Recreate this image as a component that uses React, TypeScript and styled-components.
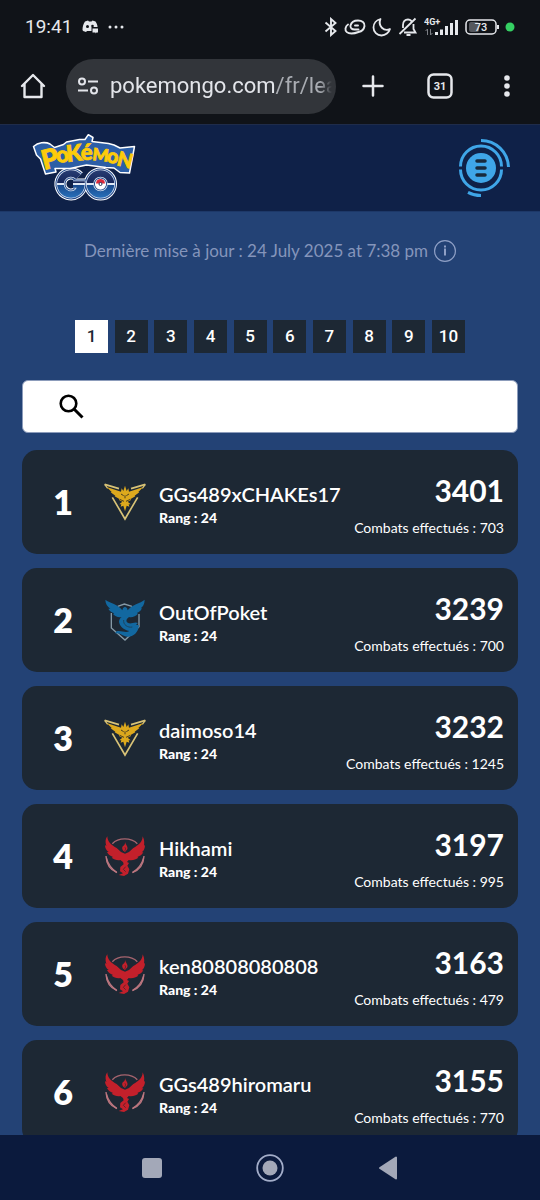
import React from 'react';
import styled, { createGlobalStyle } from 'styled-components';

const GlobalStyle = createGlobalStyle`
  *, *::before, *::after { box-sizing: border-box; }
  body { margin: 0; background: #234275; font-family: Lato, "Open Sans", sans-serif; }
  button { border: 0; padding: 0; background: none; font: inherit; color: inherit; cursor: pointer; }
  ol { list-style: none; margin: 0; padding: 0; }
  h2, p { margin: 0; }
  svg { display: block; flex: none; }
`;

const Screen = styled.div`
  display: flex;
  flex-direction: column;
  height: 100vh;
  overflow: hidden;
`;

/* ---------- Phone and browser chrome ---------- */

const Chrome = styled.div`
  flex: none;
  background: #101318;
  color: #e6e8ec;
  font-family: Roboto, sans-serif;
`;

const StatusBar = styled.div`
  display: flex;
  align-items: center;
  height: 54px;
  padding: 0 25px;
  gap: 10px;
`;

const Clock = styled.time`
  font-size: 19px;
  line-height: 24px;
`;

const StatusIcons = styled.div`
  display: flex;
  align-items: center;
  gap: 6px;
  margin-left: auto;
`;

const AddressRow = styled.div`
  display: flex;
  align-items: center;
  height: 64px;
  margin-bottom: 6px;
  padding: 0 20px;
`;

const ToolButton = styled.button`
  display: flex;
  align-items: center;
  justify-content: center;
  flex: none;
  width: 26px;
  height: 40px;
`;

const AddressPill = styled.button`
  display: flex;
  align-items: center;
  flex: 1;
  min-width: 0;
  height: 55px;
  margin-left: 20px;
  padding: 0 4px 0 12px;
  gap: 12px;
  border-radius: 28px;
  background: #32353a;
`;

const Address = styled.span`
  flex: 1;
  min-width: 0;
  overflow: hidden;
  white-space: nowrap;
  text-align: left;
  font-size: 22px;
  line-height: 32px;
  color: #a9acb2;
  mask-image: linear-gradient(to left, transparent, #000 12px);
`;

const Domain = styled.span`
  color: #e3e5ea;
`;

const Tools = styled.div`
  display: flex;
  align-items: center;
  gap: 41px;
  margin-left: 24px;
`;

/* ---------- Site ---------- */

const SiteHeader = styled.header`
  display: flex;
  align-items: center;
  justify-content: space-between;
  flex: none;
  height: 88px;
  padding: 0 29px 0 32px;
  background: #0f2148;
  border-top: 1px solid #1f2c4a;
  border-bottom: 1px solid #1d3868;
`;

const LogoLink = styled.a`
  display: block;
`;

const MenuButton = styled.button`
  display: block;
`;

const Main = styled.main`
  flex: 1;
  min-height: 0;
  overflow: hidden;
  background: #234275;
  padding: 27px 22px 0;
`;

const Updated = styled.p`
  display: flex;
  align-items: center;
  justify-content: center;
  gap: 6px;
  height: 24px;
  font-size: 17px;
  line-height: 24px;
  color: #8595bb;
`;

const InfoButton = styled.button`
  display: block;
`;

const Pages = styled.nav`
  display: flex;
  justify-content: space-between;
  width: 100%;
  max-width: 390px;
  margin: 57px auto 0;
`;

const PageLink = styled.a<{ $current?: boolean }>`
  width: 33px;
  height: 33px;
  background: ${(p) => (p.$current ? '#ffffff' : '#1d2834')};
  color: ${(p) => (p.$current ? '#1d2834' : '#ffffff')};
  font: 500 17px/33px Roboto, sans-serif;
  text-align: center;
  text-decoration: none;
`;

const SearchBox = styled.label`
  display: flex;
  align-items: center;
  gap: 12px;
  height: 53px;
  margin-top: 27px;
  padding: 0 16px 0 36px;
  border: 1px solid #8c9cbb;
  border-radius: 6px;
  background: #fff;
`;

const SearchInput = styled.input`
  flex: 1;
  min-width: 0;
  height: 40px;
  border: 0;
  outline: 0;
  background: transparent;
  font: 400 18px/24px Lato, sans-serif;
`;

const Board = styled.ol`
  display: flex;
  flex-direction: column;
  gap: 14px;
  margin-top: 17px;
`;

const Card = styled.li`
  display: grid;
  grid-template-columns: 82px 42px 1fr auto;
  height: 104px;
  padding-right: 14px;
  border-radius: 15px;
  background: #1d2834;
  color: #fff;
`;

const Rank = styled.span`
  align-self: center;
  text-align: center;
  font-size: 34px;
  line-height: 40px;
  font-weight: 800;
`;

const Team = styled.span`
  align-self: center;
`;

const Trainer = styled.div`
  padding: 31px 0 0 13px;
`;

const Name = styled.h2`
  font-size: 20px;
  line-height: 26px;
  font-weight: 600;
`;

const Level = styled.p`
  font-size: 14px;
  line-height: 22px;
  font-weight: 900;
`;

const Result = styled.div`
  padding-top: 20px;
  text-align: right;
`;

const Score = styled.p`
  font-size: 30px;
  line-height: 40px;
  font-weight: 700;
`;

const Battles = styled.p`
  margin-top: 8px;
  font-size: 14px;
  line-height: 20px;
`;

const SystemNav = styled.nav`
  display: flex;
  align-items: center;
  justify-content: center;
  flex: none;
  gap: 90px;
  height: 65px;
  background: #0b1a3d;
`;

const SystemButton = styled.button`
  display: flex;
  align-items: center;
  justify-content: center;
  width: 28px;
  height: 28px;
`;

/* ---------- Drawings ---------- */

const wordmark = [
  { char: 'P', x: 12, y: 37, size: 27, turn: -14 },
  { char: 'o', x: 25, y: 30, size: 22, turn: -8 },
  { char: 'K', x: 35, y: 29, size: 23, turn: -6 },
  { char: 'é', x: 49, y: 27, size: 22, turn: -2 },
  { char: 'M', x: 60, y: 27, size: 17, turn: 6 },
  { char: 'o', x: 74, y: 29, size: 20, turn: 10 },
  { char: 'N', x: 84, y: 32, size: 20, turn: 14 },
];

const Rings = ({ stroke, width }: { stroke: string; width: number }) => (
  <g fill="none" stroke={stroke} strokeWidth={width}>
    <circle cx="68.5" cy="51" r="10.5" />
    <path d="M46.5 43.7 A10.5 10.5 0 1 0 49.4 51.5 H41" />
  </g>
);

const Logo = () => (
  <svg width="104" height="70" viewBox="0 0 104 70" role="img" aria-label="Pokémon GO">
    <defs>
      <linearGradient id="ring" gradientUnits="userSpaceOnUse" x1="0" y1="35" x2="0" y2="67">
        <stop offset="0" stopColor="#2b4077" />
        <stop offset="0.48" stopColor="#15265a" />
        <stop offset="0.48" stopColor="#dfe8f4" />
        <stop offset="0.52" stopColor="#dfe8f4" />
        <stop offset="0.52" stopColor="#19498c" />
        <stop offset="1" stopColor="#2a76c2" />
      </linearGradient>
    </defs>
    <Rings stroke="#ffffff" width={12} />
    <Rings stroke="#21488a" width={10} />
    <Rings stroke="#d5e0f0" width={8} />
    <Rings stroke="url(#ring)" width={6.5} />
    <circle cx="68.5" cy="51" r="5.2" fill="#fff" />
    <path d="M64 50.4 A4.5 4.5 0 0 1 73 50.4 Z" fill="#d9283a" />
    <circle cx="68.5" cy="51" r="1.5" fill="#fff" stroke="#26345c" strokeWidth="1" />
    <path
      d="M1.5 13.5 C6 9.5 13 8.5 18 11 L22.5 14.5 L31.5 11.5 L34.5 9 L47.5 6.5 L53 6.5 L56.3 1.7 L61 4.5 L60 8.5 L76.5 10.5 L82 12 L88 15 L102.5 13.5 L97.5 40 L88 39.5 L82 35 L74 34.5 L54.5 32 L38 35.5 L23 35.5 L24 39 L13.5 41 L8.5 26 L4.5 22 Z"
      fill="#2c5ea6"
      stroke="#ffffff"
      strokeWidth="1.5"
      strokeLinejoin="round"
    />
    <g fill="#fdcb0a" stroke="#fdcb0a" strokeWidth="0.8" fontFamily="Lato, sans-serif" fontWeight="900">
      {wordmark.map((l, i) => (
        <text key={i} x={l.x} y={l.y} fontSize={l.size} rotate={l.turn}>
          {l.char}
        </text>
      ))}
    </g>
  </svg>
);

const MenuIcon = () => (
  <svg width="60" height="60" viewBox="-30 -30 60 60" aria-hidden="true">
    <circle r="15" fill="#3fa6e8" />
    <g fill="none" stroke="#3fa6e8" strokeWidth="3">
      <path d="M-20.5 -1.5 A20.5 20.5 0 0 1 20.5 -1.5" />
      <path d="M-20.5 1.5 A20.5 20.5 0 0 0 20.5 1.5" />
      <path d="M0 -27.5 A27.5 27.5 0 0 1 27.5 -1" />
      <path d="M0 27.5 A27.5 27.5 0 0 1 -13 24.3" />
    </g>
    <path d="M-4 -7 H4 M-4 0 H4 M-4 7 H4" stroke="#182a3c" strokeWidth="3.5" strokeLinecap="round" />
  </svg>
);

type TeamName = 'instinct' | 'mystic' | 'valor';

const InstinctIcon = () => (
  <svg width="42" height="40" viewBox="27 20 126 120" role="img" aria-label="Instinct">
    <g fill="none" stroke="#d8c377" strokeWidth="5">
      <path d="M52 66 L90 131 L128 66" />
      <path d="M29 27 L72 40 M151 27 L108 40" />
      <path d="M29 27 L38 39 M151 27 L142 39" strokeWidth="4" />
    </g>
    <path
      fill="#dda91d"
      d="M35 35 L78 49 L80 39 L85 47 L90 31 L95 47 L100 39 L102 49 L145 35 L130 50 L133 51 L119 61 L121 63 L107 71 L108 74 L98 79 L107 87 L101 87 L103 94 L95 91 L90 108 L85 91 L77 94 L79 87 L73 87 L82 79 L72 74 L73 71 L59 63 L61 61 L47 51 L50 50 Z"
    />
    <path d="M78 56 L86 61 M102 56 L94 61 M90 60 L90 69 M74 72 L87 78 M106 72 L93 78" stroke="#493e20" strokeWidth="3" />
  </svg>
);

const MysticIcon = () => (
  <svg width="42" height="44" viewBox="27 22 126 132" role="img" aria-label="Mystic">
    <path d="M49 67 V112 L90 148 L132 108 V70 M68 47 L88 40 L111 47" fill="none" stroke="#8599a6" strokeWidth="4" />
    <path
      fill="#1268a0"
      d="M31 27 C44 37 70 41 82 59 L84 52 L90 48 L96 52 L98 59 C110 41 136 39 149 27 C149 40 143 49 137 53 L141 53 C137 62 130 66 125 67 L129 69 C122 77 112 81 102 79 C92 86 92 95 102 98 C110 100 120 92 129 97 L123 102 L132 104 C130 125 116 139 98 138 C82 137 78 125 60 128 L65 122 C78 118 92 129 103 121 C84 118 72 104 72 92 C73 86 76 82 80 79 C69 82 60 76 54 70 L58 68 C49 65 43 61 40 54 L46 54 C37 47 31 39 31 27 Z"
    />
    <path d="M86 88 C84 102 98 112 112 109" fill="none" stroke="#1b4560" strokeWidth="3" />
  </svg>
);

const ValorIcon = () => (
  <svg width="42" height="42" viewBox="27 28 126 126" role="img" aria-label="Valor">
    <path d="M52 54 C70 35 108 35 127 54" fill="none" stroke="#a7656f" strokeWidth="4" />
    <path d="M33 91 C34 115 47 133 66 141 M147 91 C146 115 133 133 112 141" fill="none" stroke="#bd7780" strokeWidth="4" />
    <path d="M34 96 C39 116 49 129 65 140 M146 96 C141 116 131 129 113 140" fill="none" stroke="#bd7780" strokeWidth="4" />
    <path
      fill="#c3202b"
      d="M37 32 C37 48 50 60 65 67 L78 79 L90 84 L102 79 L115 67 C130 60 143 48 143 32 C149 44 148 54 147 60 L150 58 C150 69 146 76 140 80 L145 80 C140 89 133 92 127 94 L130 96 C122 102 113 105 101 103 L96 109 L102 112 L97 120 L103 131 L99 144 L87 151 L71 148 L84 143 L75 137 L76 124 L86 116 L84 109 L76 103 C66 105 57 101 50 96 L54 94 C45 91 39 86 36 79 L41 79 C34 74 30 68 30 58 L34 61 C30 49 31 40 37 32 Z"
    />
    <path d="M90 48 C92 58 100 62 97 71 L90 79 C82 74 79 67 84 61 C88 59 91 55 90 48 Z" fill="#c3202b" />
    <path d="M90 65 C93 69 91 73 89 76 M92 123 L85 131 L92 138" fill="none" stroke="#60202a" strokeWidth="3" />
  </svg>
);

const teamIcons: Record<TeamName, React.FC> = {
  instinct: InstinctIcon,
  mystic: MysticIcon,
  valor: ValorIcon,
};

const StatusGlyphs = () => (
  <>
    <svg width="14" height="20" viewBox="0 0 14 20" fill="none" stroke="#e6e8ec" strokeWidth="1.9" aria-hidden="true">
      <path d="M1.5 5.5 L11.5 14 L7 18 V2 L11.5 6 L1.5 14.5" />
    </svg>
    <svg width="22" height="18" viewBox="0 0 22 18" fill="none" stroke="#e6e8ec" strokeWidth="1.9" strokeLinecap="round" aria-hidden="true">
      <path d="M14.5 11.5 H10.5 C8 11.5 6 10 6.5 7.5 C7.2 4.5 10 2.5 14 2.5 C18 2.5 21 4.5 20.5 8 C20 11.5 17 13.5 14.5 14 C12 15 10 15.500 7.500 15.500 C3.500 15.500 1 13.500 1.500 10.500 C1.800 8.500 2.800 7.200 4 6.500" />
      <path d="M11 7.500 H14" />
    </svg>
    <svg width="20" height="20" viewBox="0 0 20 20" fill="none" stroke="#e6e8ec" strokeWidth="1.8" strokeLinejoin="round" aria-hidden="true">
      <path d="M8.5 2 C4.5 3 1.5 6.5 1.5 10.5 C1.5 15 5 18.5 9.5 18.5 C13.5 18.5 17 15.5 18 12 C12 15 5.5 9 8.5 2 Z" />
    </svg>
    <svg width="20" height="20" viewBox="0 0 20 20" fill="none" stroke="#e6e8ec" strokeWidth="1.8" aria-hidden="true">
      <path d="M5 11 V8 C5 4.5 7 2.5 10 2.5 C11.5 2.5 12.5 3 13.5 4 M15.5 7 V12 L17.5 15.5 H6 M8.5 18 H12.5 M1.5 17 L17.5 1.5" />
    </svg>
  </>
);

const Signal = () => (
  <svg width="35" height="20" viewBox="0 0 35 20" aria-label="4G+" role="img">
    <text x="0" y="8" fontFamily="Roboto, sans-serif" fontSize="9" fontWeight="700" fill="#e6e8ec">4G+</text>
    <path d="M3.5 18 V12 L1.5 14 M6.5 12 V18 L8.5 16" fill="none" stroke="#7b7e84" />
    <path d="M12.5 18 V15 M17.5 18 V12.5 M22.5 18 V9 M27.5 18 V6 M32.5 18 V3" stroke="#e6e8ec" strokeWidth="3" />
  </svg>
);

const Battery = () => (
  <svg width="34" height="18" viewBox="0 0 34 18" role="img" aria-label="73">
    <rect x="4" y="4" width="10" height="10" rx="2" fill="#55585e" />
    <rect x="1" y="2" width="30" height="14" rx="4" fill="none" stroke="#e6e8ec" strokeWidth="1.5" />
    <path d="M33 7 V11" stroke="#e6e8ec" strokeWidth="2" />
    <text x="16" y="13" textAnchor="middle" fontFamily="Roboto, sans-serif" fontSize="11" fontWeight="500" fill="#e6e8ec">73</text>
  </svg>
);

/* ---------- Data ---------- */

const trainers: { name: string; team: TeamName; level: number; score: number; battles: number }[] = [
  { name: 'GGs489xCHAKEs17', team: 'instinct', level: 24, score: 3401, battles: 703 },
  { name: 'OutOfPoket', team: 'mystic', level: 24, score: 3239, battles: 700 },
  { name: 'daimoso14', team: 'instinct', level: 24, score: 3232, battles: 1245 },
  { name: 'Hikhami', team: 'valor', level: 24, score: 3197, battles: 995 },
  { name: 'ken80808080808', team: 'valor', level: 24, score: 3163, battles: 479 },
  { name: 'GGs489hiromaru', team: 'valor', level: 24, score: 3155, battles: 770 },
];

const pages = [1, 2, 3, 4, 5, 6, 7, 8, 9, 10];

export default function App() {
  return (
    <Screen>
      <GlobalStyle />
      <Chrome>
        <StatusBar>
          <Clock>19:41</Clock>
          <svg width="16" height="14" viewBox="0 0 16 14" aria-hidden="true">
            <path d="M3 1.5 L6 0.5 L7 1.5 H9.5 L10.5 0.5 L13.5 1.5 C14.5 3 15.5 5 15.5 7 H9.5 V11 H5 L4 12 C2 11.5 1 11 0.5 10 C0.5 6.5 1.5 3.5 3 1.5 Z" fill="#e6e8ec" />
            <circle cx="5.5" cy="6.5" r="1.5" fill="#101318" />
            <circle cx="10.5" cy="6" r="1.3" fill="#101318" />
            <path d="M10.5 8.5 H16 V12.5 H14.5 L13.5 13.5 V12.5 H10.5 Z" fill="#e6e8ec" />
          </svg>
          <svg width="18" height="4" viewBox="0 0 18 4" fill="#e6e8ec" aria-hidden="true">
            <circle cx="2" cy="2" r="1.5" />
            <circle cx="8" cy="2" r="1.5" />
            <circle cx="14" cy="2" r="1.5" />
          </svg>
          <StatusIcons>
            <StatusGlyphs />
            <Signal />
            <Battery />
            <svg width="10" height="10" viewBox="0 0 10 10" aria-hidden="true">
              <circle cx="5" cy="5" r="4.5" fill="#35d063" />
            </svg>
          </StatusIcons>
        </StatusBar>
        <AddressRow>
          <ToolButton aria-label="Accueil">
            <svg width="26" height="26" viewBox="0 0 26 26" fill="none" stroke="#e6e8ec" strokeWidth="2.4" strokeLinejoin="round" strokeLinecap="round">
              <path d="M2 13 L13 2 L24 13 M4.5 11 V24 H21.5 V11" />
            </svg>
          </ToolButton>
          <AddressPill aria-label="Adresse : pokemongo.com/fr/lea">
            <svg width="20" height="18" viewBox="0 0 20 18" fill="none" stroke="#e3e5ea" strokeWidth="2">
              <circle cx="4" cy="4.5" r="3" />
              <path d="M10 4.5 H20 M0 13.5 H10" />
              <circle cx="16" cy="13.5" r="3" />
            </svg>
            <Address>
              <Domain>pokemongo.com</Domain>/fr/lea
            </Address>
          </AddressPill>
          <Tools>
            <ToolButton aria-label="Nouvel onglet">
              <svg width="22" height="22" viewBox="0 0 22 22" stroke="#e6e8ec" strokeWidth="2.5" strokeLinecap="round">
                <path d="M11 1.5 V20.5 M1.5 11 H20.5" />
              </svg>
            </ToolButton>
            <ToolButton aria-label="31 onglets">
              <svg width="26" height="26" viewBox="0 0 26 26">
                <rect x="1.5" y="1.5" width="23" height="23" rx="5" fill="none" stroke="#e6e8ec" strokeWidth="2.5" />
                <text x="13" y="17" textAnchor="middle" fontFamily="Roboto, sans-serif" fontSize="11" fontWeight="700" fill="#e6e8ec">31</text>
              </svg>
            </ToolButton>
            <ToolButton aria-label="Plus d'options">
              <svg width="6" height="24" viewBox="0 0 6 24" fill="#e6e8ec">
                <circle cx="3" cy="4" r="2.8" />
                <circle cx="3" cy="12" r="2.8" />
                <circle cx="3" cy="20" r="2.8" />
              </svg>
            </ToolButton>
          </Tools>
        </AddressRow>
      </Chrome>

      <SiteHeader>
        <LogoLink href="#accueil" aria-label="Pokémon GO">
          <Logo />
        </LogoLink>
        <MenuButton aria-label="Menu">
          <MenuIcon />
        </MenuButton>
      </SiteHeader>

      <Main>
        <Updated>
          Dernière mise à jour : 24 July 2025 at 7:38 pm
          <InfoButton aria-label="Informations">
            <svg width="22" height="22" viewBox="0 0 22 22" fill="none" stroke="#8fa0c6">
              <circle cx="11" cy="11" r="10.4" strokeWidth="1.2" />
              <path d="M11 8.5 V15.5 M11 5.5 V7.5" strokeWidth="2" />
            </svg>
          </InfoButton>
        </Updated>

        <Pages aria-label="Pages">
          {pages.map((n) => (
            <PageLink key={n} href={`#page-${n}`} $current={n === 1} aria-current={n === 1 ? 'page' : undefined}>
              {n}
            </PageLink>
          ))}
        </Pages>

        <SearchBox>
          <svg width="26" height="26" viewBox="0 0 26 26" fill="none" stroke="#000" strokeWidth="2.6" aria-hidden="true">
            <circle cx="9.5" cy="9.5" r="7.8" />
            <path d="M15 15 L23.5 23.5" strokeWidth="3" />
          </svg>
          <SearchInput type="search" aria-label="Rechercher" />
        </SearchBox>

        <Board>
          {trainers.map((t, i) => {
            const Icon = teamIcons[t.team];
            return (
              <Card key={t.name}>
                <Rank>{i + 1}</Rank>
                <Team>
                  <Icon />
                </Team>
                <Trainer>
                  <Name>{t.name}</Name>
                  <Level>Rang : {t.level}</Level>
                </Trainer>
                <Result>
                  <Score>{t.score}</Score>
                  <Battles>Combats effectués : {t.battles}</Battles>
                </Result>
              </Card>
            );
          })}
        </Board>
      </Main>

      <SystemNav aria-label="Navigation système">
        <SystemButton aria-label="Applications récentes">
          <svg width="20" height="20" viewBox="0 0 20 20">
            <rect width="20" height="20" rx="3" fill="#a3a8b8" />
          </svg>
        </SystemButton>
        <SystemButton aria-label="Écran d'accueil">
          <svg width="28" height="28" viewBox="0 0 28 28">
            <circle cx="14" cy="14" r="12.8" fill="none" stroke="#a3adc9" strokeWidth="1.8" />
            <circle cx="14" cy="14" r="7.5" fill="#a3a8b8" />
          </svg>
        </SystemButton>
        <SystemButton aria-label="Retour">
          <svg width="20" height="24" viewBox="0 0 20 24">
            <path d="M2 12 L18 1.5 V22.5 Z" fill="#a3a8b8" stroke="#a3a8b8" strokeWidth="2" strokeLinejoin="round" />
          </svg>
        </SystemButton>
      </SystemNav>
    </Screen>
  );
}
